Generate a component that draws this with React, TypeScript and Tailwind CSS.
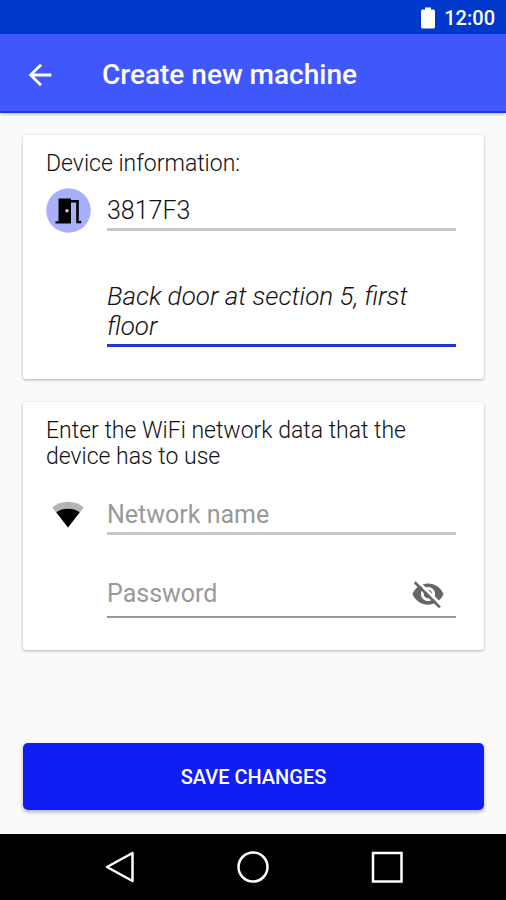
import { ReactNode, useState } from "react";

const BackArrow = () => (
  <svg width="34" height="34" viewBox="0 0 24 24" fill="#fff">
    <path d="M20 11H7.83l5.59-5.59L12 4l-8 8 8 8 1.41-1.41L7.83 13H20v-2z" />
  </svg>
);

const Battery = () => (
  <svg width="16" height="22" viewBox="0 0 16 22" fill="#fff">
    <path d="M5 0.5h6v2h2.5a1.5 1.5 0 0 1 1.5 1.5v16a1.5 1.5 0 0 1-1.5 1.5h-11A1.5 1.5 0 0 1 1 20V4a1.5 1.5 0 0 1 1.5-1.5H5z" />
  </svg>
);

const Door = () => (
  <svg width="45" height="45" viewBox="0 0 45 45">
    <circle cx="22.5" cy="22.5" r="22.3" fill="#a9b0fb" />
    <path d="M12.5 10.5h12.5v25H9.5v-2.2h3z" fill="#000" />
    <path d="M25 13.2h6.5v20.8h3.7" fill="none" stroke="#000" strokeWidth="2.6" />
    <circle cx="21" cy="22.7" r="1.7" fill="#c9cdfd" />
  </svg>
);

const Wifi = () => (
  <svg width="34" height="34" viewBox="0 0 34 34">
    <path d="M17 30.5L1.2 10.5C5.5 6.8 11 4.7 17 4.7s11.5 2.1 15.8 5.8z" fill="#b3b3b3" />
    <path d="M17 30.5L5.3 15.2c3.3-2.3 7.3-3.4 11.7-3.4s8.4 1.1 11.7 3.4z" fill="#000" />
  </svg>
);

const EyeOff = () => (
  <svg width="34" height="34" viewBox="0 0 24 24">
    <path
      d="M12 4.5C7 4.5 2.73 7.61 1 12c1.73 4.39 6 7.5 11 7.5s9.27-3.11 11-7.5c-1.73-4.39-6-7.5-11-7.5zM12 17c-2.76 0-5-2.24-5-5s2.24-5 5-5 5 2.24 5 5-2.24 5-5 5zm0-8c-1.66 0-3 1.34-3 3s1.34 3 3 3 3-1.34 3-3-1.34-3-3-3z"
      fill="#666"
    />
    <path d="M4 2.3L22 20.3" stroke="#fff" strokeWidth="2" />
    <path d="M2.6 3.7L20.4 21.5" stroke="#666" strokeWidth="1.8" />
  </svg>
);

const Card = ({ title, children }: { title: string; children: ReactNode }) => (
  <section className="rounded-[3px] bg-white pl-[23px] pr-7 pt-4 pb-8 shadow-[0_1px_3px_rgba(0,0,0,0.3)]">
    <h2 className="text-[23px] leading-[26px] font-light text-[#111]">{title}</h2>
    {children}
  </section>
);

export default function App() {
  const [device, setDevice] = useState("3817F3");
  const [description, setDescription] = useState(
    "Back door at section 5, first floor"
  );
  const [showPassword, setShowPassword] = useState(false);

  return (
    <div className="flex min-h-screen flex-col bg-[#fafafa] font-[Roboto,sans-serif]">
      <div className="flex h-[34px] items-center justify-end gap-2 bg-[#0038cc] pt-px pr-[11px] text-white">
        <Battery />
        <span className="text-[20px] leading-6 font-medium">12:00</span>
      </div>
      <header className="flex h-[79px] items-center gap-[45px] border-b-2 border-[#1c3bdc] bg-[#4057fc] pt-1 pl-[23px] text-white shadow-[0_1px_3px_rgba(0,0,0,0.3)]">
        <button type="button" aria-label="Back">
          <BackArrow />
        </button>
        <h1 className="text-[28px] leading-8 font-medium">Create new machine</h1>
      </header>

      <main className="flex flex-1 flex-col pt-[22px] pr-[22px] pb-6 pl-[23px]">
        <div className="flex flex-col gap-[23px]">
          <Card title="Device information:">
            <div className="mt-[11px] flex gap-4">
              <div className="shrink-0">
                <Door />
              </div>
              <div className="min-w-0 flex-1">
                <input
                  aria-label="Device ID"
                  value={device}
                  onChange={(e) => setDevice(e.target.value)}
                  className="block h-[43px] w-full border-b-3 border-[#c8c8c8] pt-1 text-[25px] font-light text-[#111] outline-none"
                />
                <textarea
                  aria-label="Description"
                  rows={2}
                  value={description}
                  onChange={(e) => setDescription(e.target.value)}
                  className="mt-[50px] block w-full resize-none overflow-hidden border-b-3 border-[#2336d2] pb-[3px] text-[26px] leading-[30px] font-light text-[#111] italic outline-none"
                />
              </div>
            </div>
          </Card>

          <Card title="Enter the WiFi network data that the device has to use">
            <div className="mt-[22px] flex gap-4">
              <div className="w-[45px] shrink-0 pt-[5px] pl-[5px]">
                <Wifi />
              </div>
              <div className="min-w-0 flex-1">
                <input
                  aria-label="Network name"
                  placeholder="Network name"
                  className="block h-[43px] w-full border-b-3 border-[#c8c8c8] pt-[5px] text-[25px] text-[#333] outline-none placeholder:text-[#999]"
                />
                <div className="mt-[34px] flex h-[49px] items-center border-b-2 border-[#999] pt-0.5 pr-[11px]">
                  <input
                    aria-label="Password"
                    type={showPassword ? "text" : "password"}
                    placeholder="Password"
                    className="min-w-0 flex-1 text-[25px] text-[#333] outline-none placeholder:text-[#999]"
                  />
                  <button
                    type="button"
                    aria-label="Toggle password visibility"
                    onClick={() => setShowPassword(!showPassword)}
                  >
                    <EyeOff />
                  </button>
                </div>
              </div>
            </div>
          </Card>
        </div>

        <button
          type="button"
          className="mt-auto h-[67px] w-full rounded-[5px] bg-[#111df5] text-[20px] font-medium text-white shadow-[0_2px_4px_rgba(0,0,0,0.3)]"
        >
          SAVE CHANGES
        </button>
      </main>

      <nav className="flex h-[66px] items-center justify-center gap-[100px] bg-black">
        <button type="button" aria-label="Back">
          <svg width="34" height="34" viewBox="0 0 34 34" fill="none" stroke="#fff" strokeWidth="2.5">
            <path d="M30.5 3v28L5 17z" strokeLinejoin="round" />
          </svg>
        </button>
        <button type="button" aria-label="Home">
          <svg width="34" height="34" viewBox="0 0 34 34" fill="none" stroke="#fff" strokeWidth="2.5">
            <circle cx="17" cy="17" r="14.5" />
          </svg>
        </button>
        <button type="button" aria-label="Recent apps">
          <svg width="34" height="34" viewBox="0 0 34 34" fill="none" stroke="#fff" strokeWidth="2.5">
            <rect x="3" y="3" width="28.5" height="28.5" />
          </svg>
        </button>
      </nav>
    </div>
  );
}
